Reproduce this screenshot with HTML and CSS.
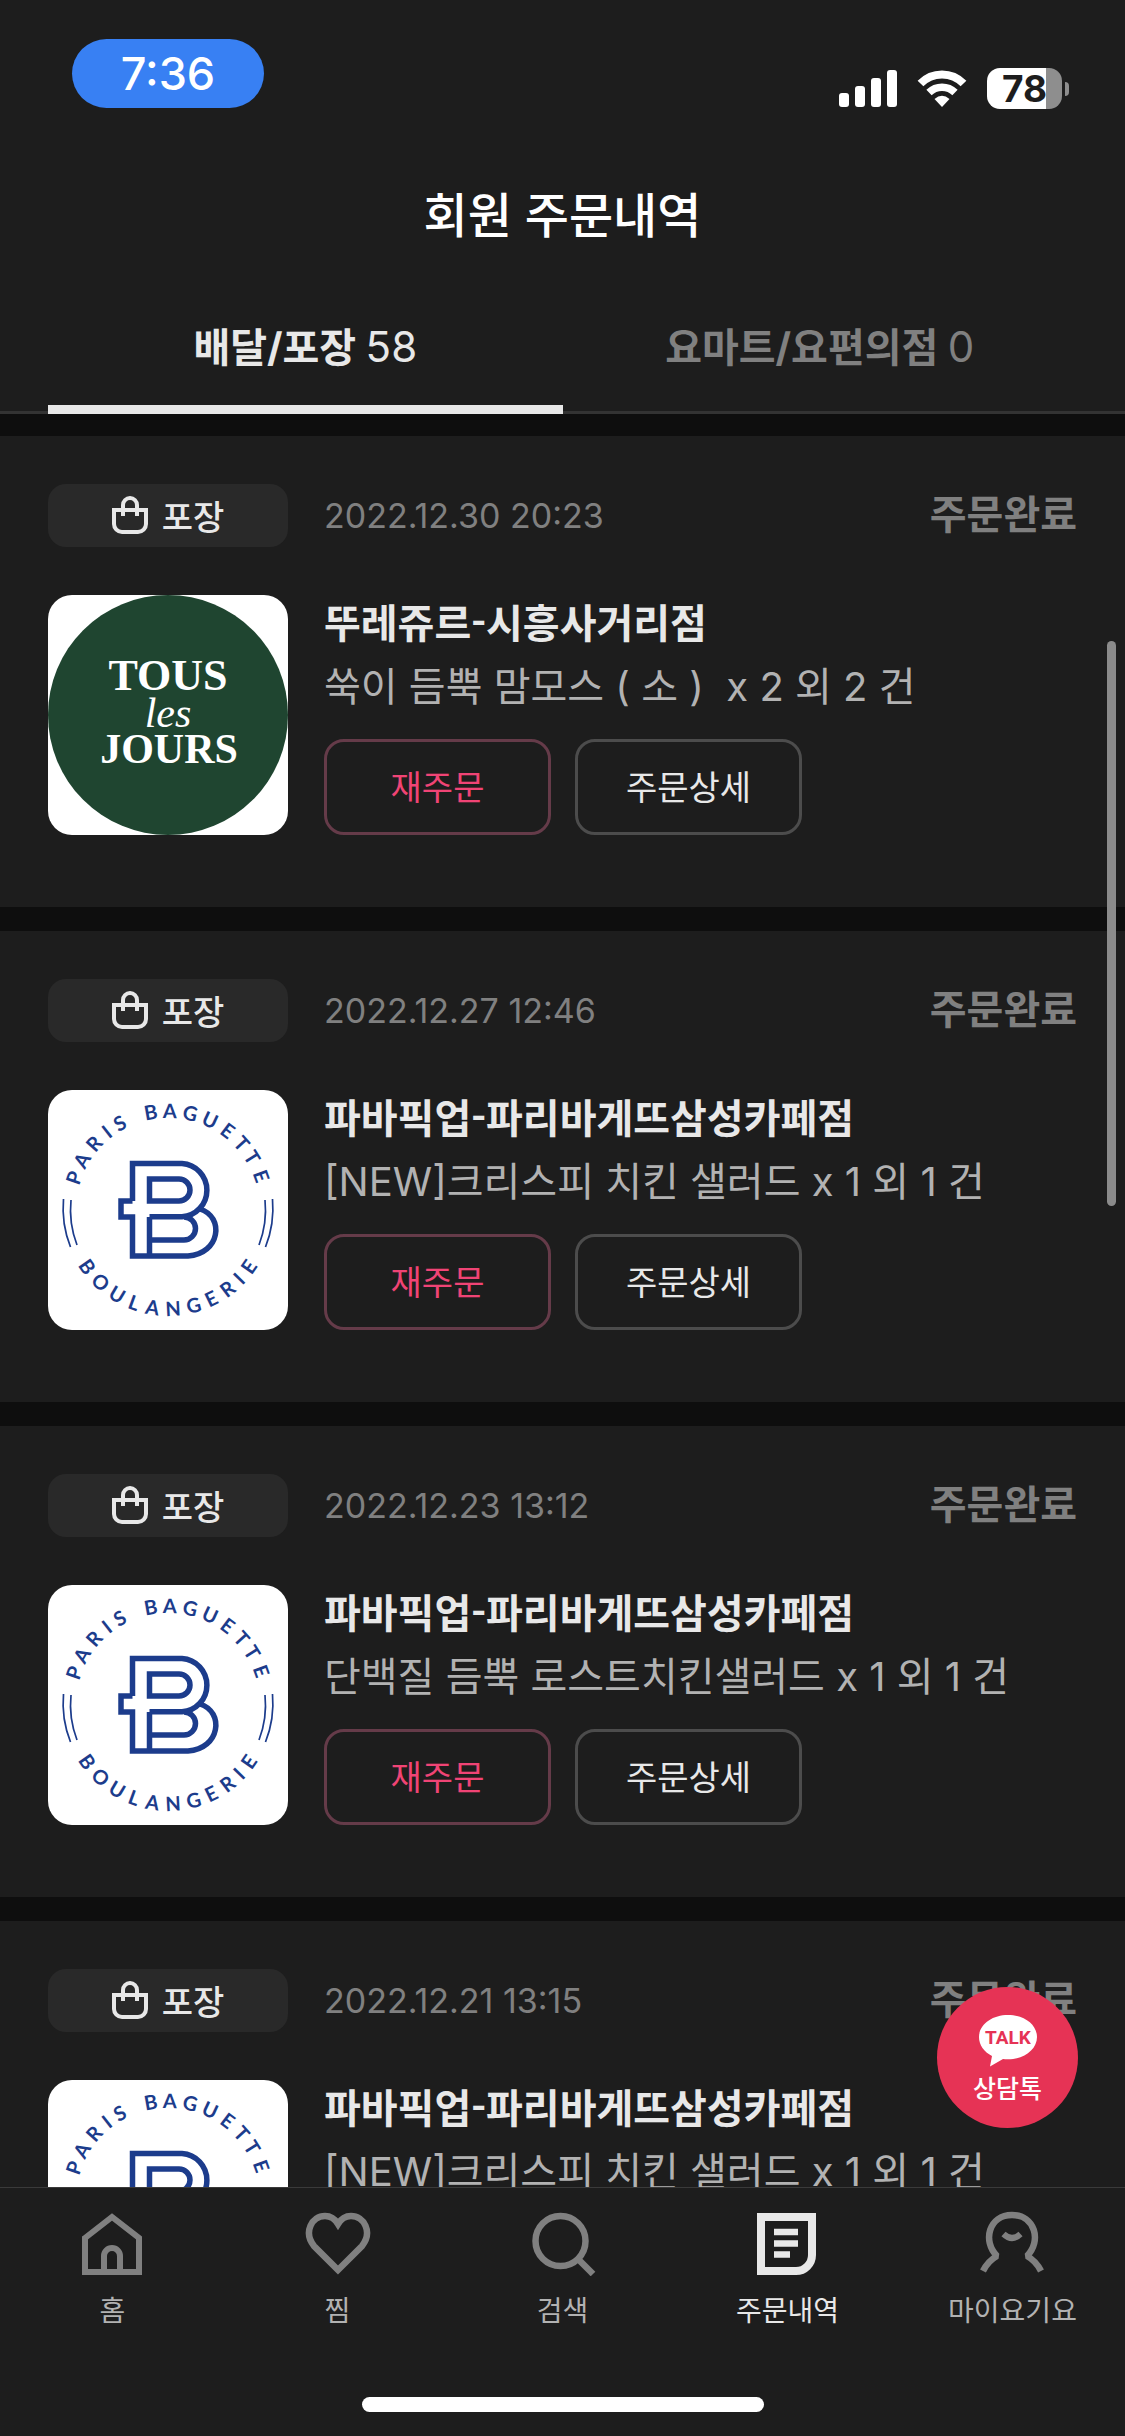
FILE: index.html
```html
<!DOCTYPE html>
<html lang="ko">
<head>
  <meta charset="UTF-8" />
  <meta name="viewport" content="width=device-width, initial-scale=1.0" />
  <title>회원 주문내역</title>
  <link rel="stylesheet" href="styles.css">
</head>
<body>
  <!-- shared icons and store logos -->
  <svg class="sprite" aria-hidden="true">
    <symbol id="bag" viewBox="0 0 36 38">
      <g fill="none" stroke="#e8e8e8" stroke-width="4">
        <path d="M2 14H34V28a8 8 0 0 1-8 8H10a8 8 0 0 1-8-8Z" />
        <path d="M11 20V9a7 7 0 0 1 14 0V20" />
      </g>
    </symbol>
    <symbol id="tous" viewBox="0 0 240 240">
      <rect width="240" height="240" fill="#fff" />
      <circle cx="120" cy="120" r="120" fill="#1f4530" />
      <g class="tous-text">
        <text x="120" y="95" font-size="44">TOUS</text>
        <text x="120" y="132" font-size="42" class="tous-les">les</text>
        <text x="121" y="168" font-size="42">JOURS</text>
      </g>
    </symbol>
    <symbol id="paris" viewBox="0 0 240 240">
      <rect width="240" height="240" fill="#fff" />
      <g fill="none" stroke="#1c3c8c" stroke-width="5.5">
        <path d="M101.500 166V127M84.500 111V73.500H134a26.500 26.700 0 0 1 0 53.300H101.500M84.500 111H73V127H84.500V166H140C172 164 177 127 152 119" />
        <path d="M101.500 89H131a11 11 0 0 1 0 22H101.500Z" />
        <path d="M136 127a11.500 11.500 0 0 1 0 23H101.500" />
      </g>
      <g fill="none" stroke="#1c3c8c" stroke-width="1.700">
        <path d="M15.500 109A105 105 0 0 0 22.500 157M23 110A98 98 0 0 0 29 155" />
        <path d="M224.500 109A105 105 0 0 1 217.500 157M217 110A98 98 0 0 1 211 155" />
      </g>
      <g class="paris-text">
        <text x="120" y="28" transform="rotate(-71 120 120)">P</text>
        <text x="120" y="28" transform="rotate(-60 120 120)">A</text>
        <text x="120" y="28" transform="rotate(-48 120 120)">R</text>
        <text x="120" y="28" transform="rotate(-38 120 120)">I</text>
        <text x="120" y="28" transform="rotate(-29 120 120)">S</text>
        <text x="120" y="28" transform="rotate(-10 120 120)">B</text>
        <text x="120" y="28" transform="rotate(1 120 120)">A</text>
        <text x="120" y="28" transform="rotate(13 120 120)">G</text>
        <text x="120" y="28" transform="rotate(25 120 120)">U</text>
        <text x="120" y="28" transform="rotate(37 120 120)">E</text>
        <text x="120" y="28" transform="rotate(48 120 120)">T</text>
        <text x="120" y="28" transform="rotate(58 120 120)">T</text>
        <text x="120" y="28" transform="rotate(70 120 120)">E</text>
        <text x="120" y="226" transform="rotate(55 120 120)">B</text>
        <text x="120" y="226" transform="rotate(43 120 120)">O</text>
        <text x="120" y="226" transform="rotate(31 120 120)">U</text>
        <text x="120" y="226" transform="rotate(20 120 120)">L</text>
        <text x="120" y="226" transform="rotate(9 120 120)">A</text>
        <text x="120" y="226" transform="rotate(-3 120 120)">N</text>
        <text x="120" y="226" transform="rotate(-15 120 120)">G</text>
        <text x="120" y="226" transform="rotate(-26 120 120)">E</text>
        <text x="120" y="226" transform="rotate(-37 120 120)">R</text>
        <text x="120" y="226" transform="rotate(-46 120 120)">I</text>
        <text x="120" y="226" transform="rotate(-55 120 120)">E</text>
      </g>
    </symbol>
  </svg>

  <div class="status-bar">
    <div class="clock">7:36</div>
    <div class="indicators">
      <svg width="58" height="38" viewBox="0 0 58 38" fill="#fff">
        <rect x="0" y="23" width="10" height="14" rx="3" />
        <rect x="16" y="16" width="10" height="21" rx="3" />
        <rect x="32" y="8" width="10" height="29" rx="3" />
        <rect x="48" y="0" width="10" height="37" rx="3" />
      </svg>
      <svg width="50" height="38" viewBox="0 0 50 38" fill="none" stroke="#fff">
        <path d="M3.500 13.500A30 30 0 0 1 46.500 13.500" stroke-width="8" />
        <path d="M12 22.500A18.500 18.500 0 0 1 38 22.500" stroke-width="7.500" />
        <path d="M25 37L17.500 29Q25 22.500 32.500 29Z" fill="#fff" stroke="none" />
      </svg>
      <div class="battery">
        <div class="battery-body">78</div>
        <div class="battery-cap"></div>
      </div>
    </div>
  </div>

  <header>
    <h1>회원 주문내역</h1>
  </header>

  <div class="tabs">
    <button class="tab active">배달/포장 <span>58</span></button>
    <button class="tab">요마트/요편의점 <span>0</span></button>
  </div>

  <main class="orders">
    <article class="order">
      <div class="order-top">
        <div class="badge"><svg><use href="#bag" /></svg>포장</div>
        <time>2022.12.30 20:23</time>
        <strong class="state">주문완료</strong>
      </div>
      <div class="order-body">
        <svg class="logo" role="img" aria-label="TOUS les JOURS"><use href="#tous" /></svg>
        <div class="info">
          <h2>뚜레쥬르-시흥사거리점</h2>
          <p>쑥이 듬뿍 맘모스 ( 소 )  x 2 외 2 건</p>
          <div class="actions">
            <button class="btn reorder">재주문</button>
            <button class="btn">주문상세</button>
          </div>
        </div>
      </div>
    </article>

    <article class="order">
      <div class="order-top">
        <div class="badge"><svg><use href="#bag" /></svg>포장</div>
        <time>2022.12.27 12:46</time>
        <strong class="state">주문완료</strong>
      </div>
      <div class="order-body">
        <svg class="logo" role="img" aria-label="PARIS BAGUETTE"><use href="#paris" /></svg>
        <div class="info">
          <h2>파바픽업-파리바게뜨삼성카페점</h2>
          <p>[NEW]크리스피 치킨 샐러드 x 1 외 1 건</p>
          <div class="actions">
            <button class="btn reorder">재주문</button>
            <button class="btn">주문상세</button>
          </div>
        </div>
      </div>
    </article>

    <article class="order">
      <div class="order-top">
        <div class="badge"><svg><use href="#bag" /></svg>포장</div>
        <time>2022.12.23 13:12</time>
        <strong class="state">주문완료</strong>
      </div>
      <div class="order-body">
        <svg class="logo" role="img" aria-label="PARIS BAGUETTE"><use href="#paris" /></svg>
        <div class="info">
          <h2>파바픽업-파리바게뜨삼성카페점</h2>
          <p>단백질 듬뿍 로스트치킨샐러드 x 1 외 1 건</p>
          <div class="actions">
            <button class="btn reorder">재주문</button>
            <button class="btn">주문상세</button>
          </div>
        </div>
      </div>
    </article>

    <article class="order">
      <div class="order-top">
        <div class="badge"><svg><use href="#bag" /></svg>포장</div>
        <time>2022.12.21 13:15</time>
        <strong class="state">주문완료</strong>
      </div>
      <div class="order-body">
        <svg class="logo" role="img" aria-label="PARIS BAGUETTE"><use href="#paris" /></svg>
        <div class="info">
          <h2>파바픽업-파리바게뜨삼성카페점</h2>
          <p>[NEW]크리스피 치킨 샐러드 x 1 외 1 건</p>
        </div>
      </div>
    </article>

    <div class="scrollbar"></div>
    <button class="talk">
      <svg width="58" height="52" viewBox="0 0 58 52">
        <path d="M29 0C13 0 0 9.500 0 22C0 30 5 37 13 41L11 51.500L24 44Q26 44.300 29 44.300C45 44.300 58 34.500 58 22C58 9.500 45 0 29 0Z" fill="#fff" />
        <text x="29" y="29">TALK</text>
      </svg>
      상담톡
    </button>
  </main>

  <footer>
    <nav>
      <a href="#">
        <svg viewBox="0 0 66 66"><path d="M5 28L32 7L59 28V62H5Z" stroke-width="6" /><path d="M24 61V46a8 8 0 0 1 16 0V61" stroke-width="6" /></svg>
        홈
      </a>
      <a href="#">
        <svg viewBox="0 0 66 66"><path d="M33 60L9 36C-2 22 7 6 20 6C26 6 30 9 33 14C36 9 40 6 46 6C59 6 68 22 57 36Z" stroke-width="6.500" /></svg>
        찜
      </a>
      <a href="#">
        <svg viewBox="0 0 66 66"><circle cx="30.500" cy="31" r="25" stroke-width="6.500" /><path d="M48 49L63 64" stroke-width="6.500" /></svg>
        검색
      </a>
      <a href="#" class="current">
        <svg viewBox="0 0 66 66"><path d="M6 7H57V45A16 16 0 0 1 41 61H6Z" stroke-width="8" /><path d="M19 22H43M19 33.500H43M19 44.500H35" stroke-width="6.500" /></svg>
        주문내역
      </a>
      <a href="#">
        <svg viewBox="0 0 66 66"><path d="M3 61Q8 51 17 46C2 31 9 5 32 5S62 31 47 46Q56 51 61 61" stroke-width="6.500" stroke-linejoin="bevel" /><path d="M23.500 24Q32 32 40.500 24" stroke-width="6" /></svg>
        마이요기요
      </a>
    </nav>
    <div class="home-indicator"></div>
  </footer>
</body>
</html>
```

FILE: styles.css
```css
:root {
  --bg-color: #1d1d1d;
  --band-color: #0e0e0e;
  --text-color: #e8e8e8;
  --muted-color: #808080;
  --accent-color: #e63355;
}

* {
  box-sizing: border-box;
}

body {
  margin: 0;
  height: 100vh;
  overflow: hidden;
  display: flex;
  flex-direction: column;
  font-family: Inter, 'Noto Sans CJK KR', sans-serif;
  background-color: var(--bg-color);
  color: var(--text-color);
}

button {
  padding: 0;
  border: none;
  background: none;
  color: inherit;
  font-family: inherit;
  cursor: pointer;
}

h1, h2, p {
  margin: 0;
}

.sprite {
  display: none;
}

/* phone status bar */
.status-bar {
  display: flex;
  justify-content: space-between;
  align-items: flex-start;
  padding: 39px 56px 0 72px;
}

.clock {
  width: 192px;
  height: 69px;
  border-radius: 35px;
  background-color: #3880f3;
  color: white;
  font-size: 45px;
  font-weight: 500;
  line-height: 69px;
  text-align: center;
}

.indicators {
  display: flex;
  align-items: center;
  gap: 20px;
  padding-top: 29px;
}

.battery {
  display: flex;
  align-items: center;
  gap: 3px;
}

.battery-body {
  width: 75px;
  height: 41px;
  border-radius: 13px;
  background: linear-gradient(to right, white 59px, #8e8e8e 59px);
  color: var(--bg-color);
  font-size: 37px;
  font-weight: 700;
  line-height: 41px;
  text-align: center;
}

.battery-cap {
  width: 4px;
  height: 14px;
  border-radius: 0 4px 4px 0;
  background-color: #8e8e8e;
}

header {
  padding: 77px 48px 73px;
}

h1 {
  color: white;
  font-size: 48px;
  font-weight: 500;
  line-height: 60px;
  text-align: center;
}

.tabs {
  display: flex;
  padding: 0 48px;
  box-shadow: inset 0 -3px #333;
}

.tab {
  flex: 1;
  height: 95px;
  padding-bottom: 30px;
  border-bottom: 9px solid transparent;
  color: var(--muted-color);
  font-size: 40px;
  font-weight: 700;
  line-height: 56px;
}

.tab.active {
  border-color: var(--text-color);
  color: var(--text-color);
}

.tab span {
  font-size: 42px;
  font-weight: 400;
}

/* order list */
.orders {
  position: relative;
  flex: 1;
  min-height: 0;
  overflow: hidden;
  display: flex;
  flex-direction: column;
  gap: 24px;
  padding-top: 22px;
  background-color: var(--band-color);
}

.order {
  flex: none;
  padding: 48px 48px 72px;
  background-color: var(--bg-color);
}

.order-top {
  display: flex;
  align-items: center;
  gap: 36px;
  margin-bottom: 48px;
}

.badge {
  display: flex;
  justify-content: center;
  align-items: center;
  gap: 14px;
  width: 240px;
  height: 63px;
  padding-bottom: 1px;
  border-radius: 18px;
  background-color: #292929;
  font-size: 34px;
  font-weight: 500;
}

.badge svg {
  width: 36px;
  height: 38px;
}

time {
  flex: 1;
  color: var(--muted-color);
  font-size: 34px;
}

.state {
  padding-bottom: 2px;
  color: var(--muted-color);
  font-size: 40px;
  line-height: 54px;
}

.order-body {
  display: flex;
  gap: 36px;
}

.logo {
  width: 240px;
  height: 240px;
  border-radius: 24px;
}

.tous-text {
  fill: white;
  font-family: 'Liberation Serif', serif;
  font-weight: 700;
  text-anchor: middle;
}

.tous-les {
  font-style: italic;
  font-weight: 400;
}

.paris-text {
  fill: #1c3c8c;
  font-family: Lato, sans-serif;
  font-size: 20px;
  font-weight: 700;
  text-anchor: middle;
}

.info h2 {
  margin-bottom: 10px;
  font-family: 'Noto Sans CJK KR', sans-serif;
  font-size: 40px;
  font-weight: 700;
  line-height: 52px;
}

.info p {
  color: #b2b2b2;
  font-size: 40px;
  line-height: 60px;
  white-space: pre;
}

.actions {
  display: flex;
  gap: 24px;
  margin-top: 22px;
}

.btn {
  width: 227px;
  height: 96px;
  padding-bottom: 4px;
  border: 3px solid #4c4c4c;
  border-radius: 20px;
  font-size: 34px;
}

.reorder {
  border-color: #653b49;
  color: #f04475;
}

.scrollbar {
  position: absolute;
  top: 227px;
  right: 9px;
  width: 9px;
  height: 565px;
  border-radius: 5px;
  background-color: #8b8b8b;
}

.talk {
  position: absolute;
  right: 47px;
  bottom: 59px;
  display: flex;
  flex-direction: column;
  align-items: center;
  gap: 4px;
  width: 141px;
  height: 141px;
  padding-top: 28px;
  border-radius: 50%;
  background-color: var(--accent-color);
  color: white;
  font-size: 25px;
  font-weight: 500;
  line-height: 36px;
}

.talk text {
  fill: var(--accent-color);
  font-family: Roboto, sans-serif;
  font-size: 19px;
  font-weight: 700;
  text-anchor: middle;
}

/* bottom navigation */
footer {
  padding-bottom: 24px;
  border-top: 1px solid #3a3a3a;
}

nav {
  display: flex;
  padding: 22px 0 65px;
}

nav a {
  flex: 1;
  display: flex;
  flex-direction: column;
  align-items: center;
  gap: 14px;
  color: #b2b2b2;
  font-size: 28px;
  line-height: 42px;
  text-decoration: none;
}

nav svg {
  width: 66px;
  height: 66px;
  fill: none;
  stroke: var(--muted-color);
}

nav .current {
  color: var(--text-color);
}

nav .current svg {
  stroke: var(--text-color);
}

.home-indicator {
  width: 402px;
  height: 15px;
  margin: 0 auto;
  border-radius: 8px;
  background-color: white;
}
```
